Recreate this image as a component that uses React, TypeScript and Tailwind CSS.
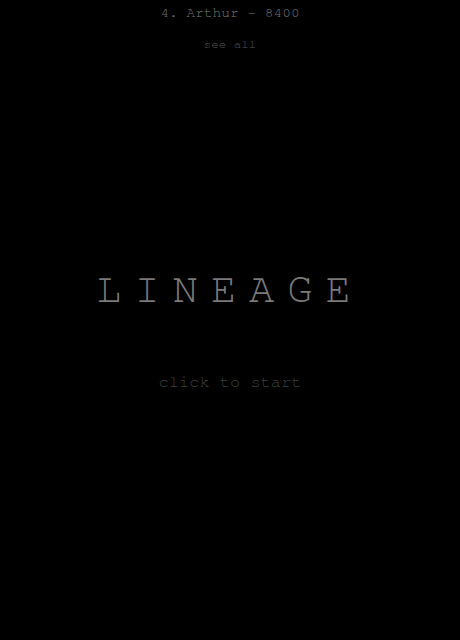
export default function App() {
  return (
    <div className="w-[460px] h-[640px] bg-black flex flex-col items-center" style={{ fontFamily: 'FreeMono, "Liberation Mono", monospace' }}>
      <div className="mt-[4px] text-[14.5px] leading-[18px] text-[#777777]">4. Arthur - 8400</div>
      <div className="mt-[15px] text-[12.5px] leading-[16px] text-[#555555]">see all</div>
      <div className="mt-[212px] text-[42px] leading-[48px] tracking-[13px] text-[#7a7a7a]">LINEAGE</div>
      <div className="mt-[59px] text-[17px] leading-[20px] text-[#3e3e3e]">click to start</div>
    </div>
  );
}
